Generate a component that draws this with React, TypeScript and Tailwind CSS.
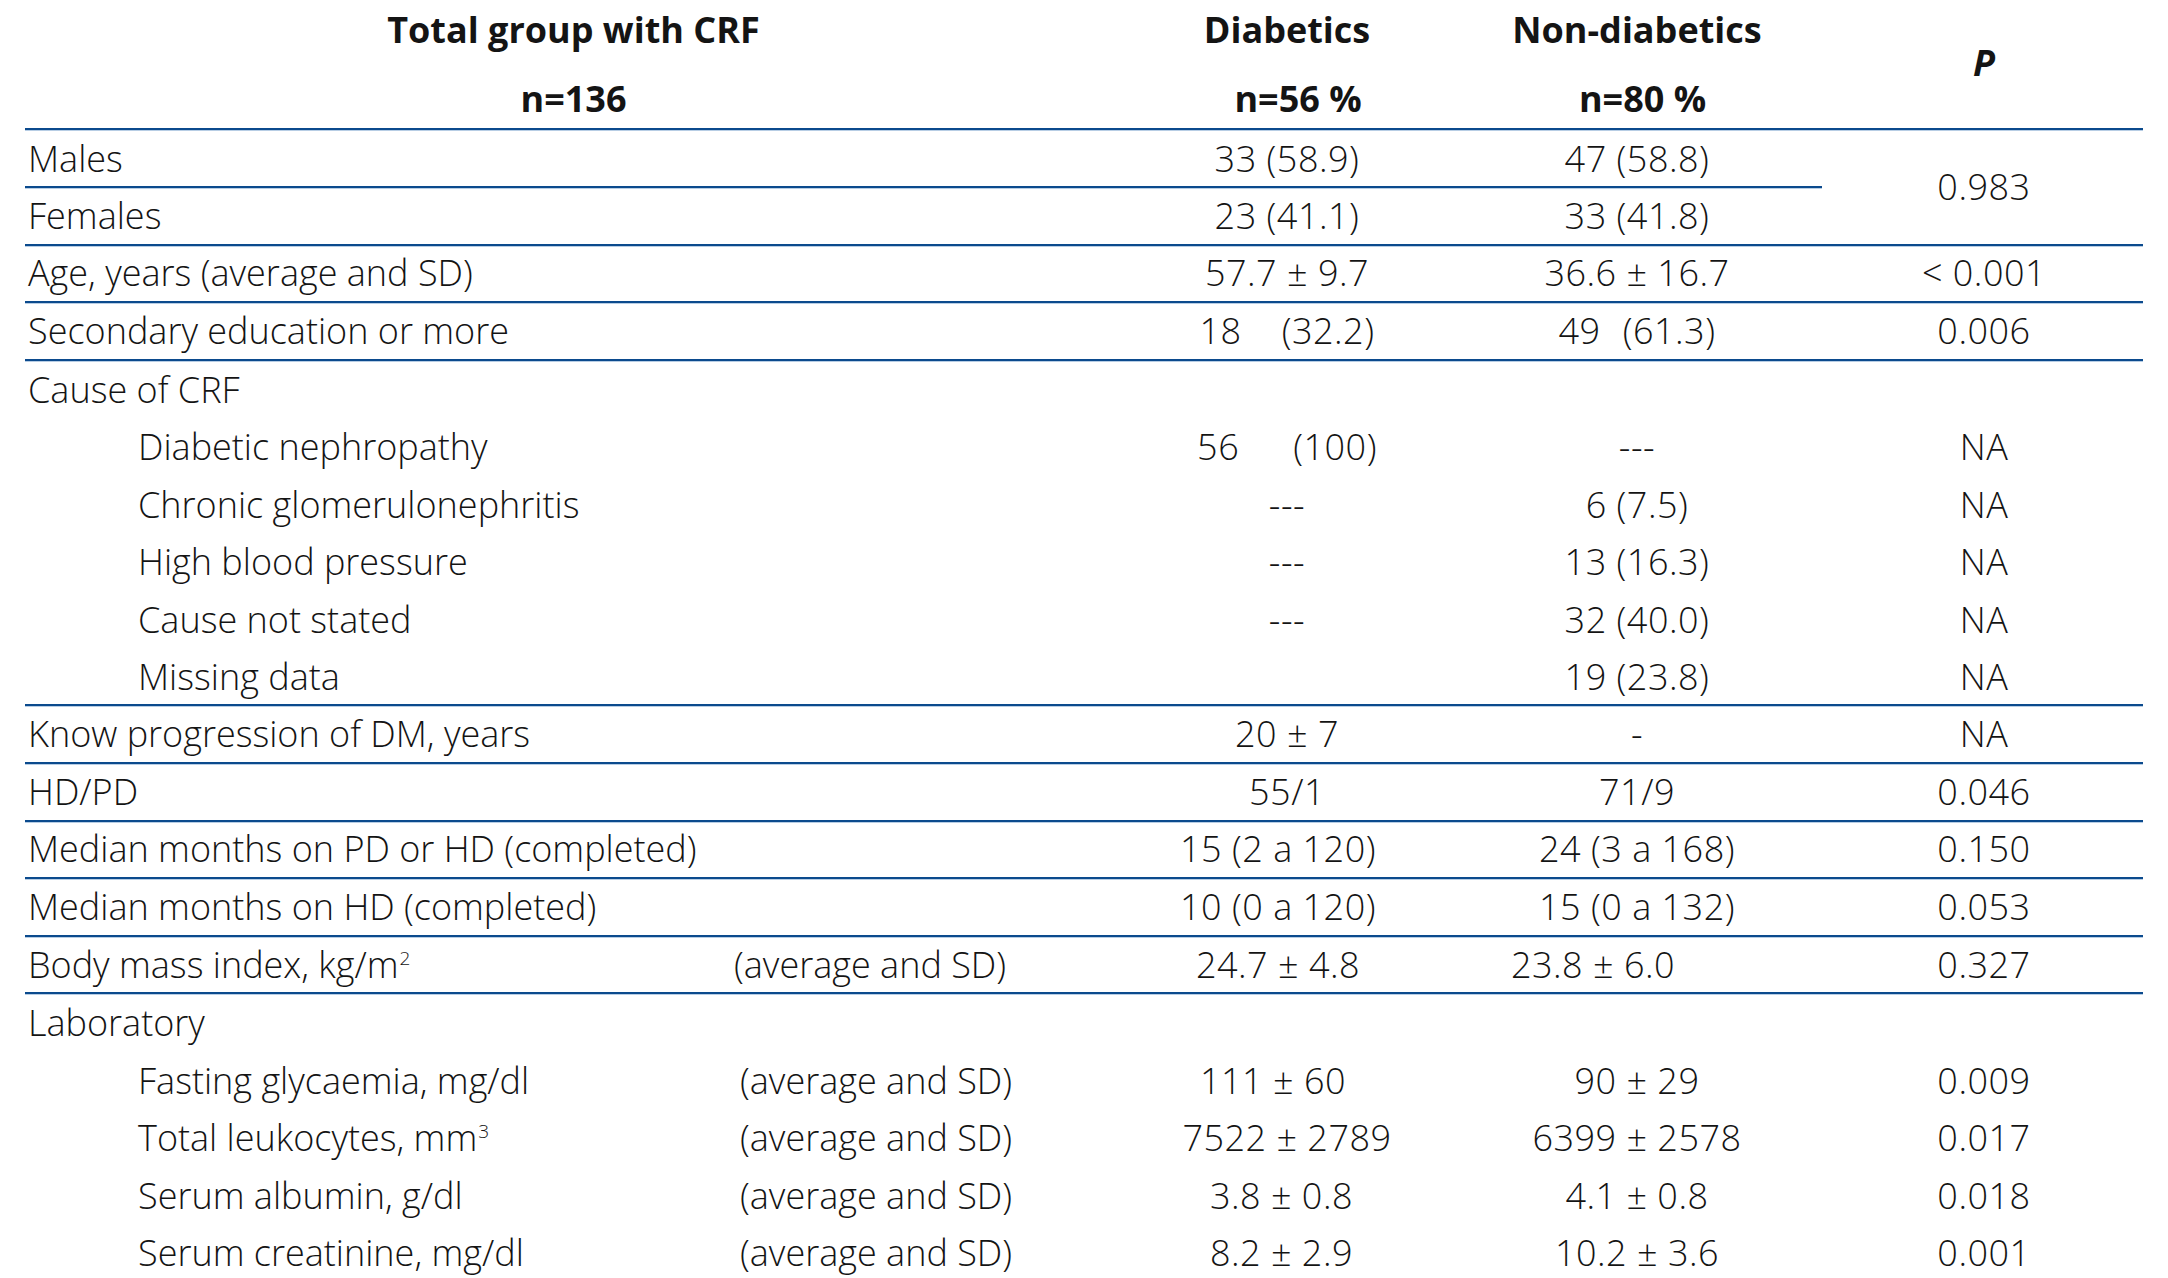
import React from "react";

type Row = {
  label: React.ReactNode;
  sub?: boolean;
  extra?: boolean;
  extraW?: string;
  d?: React.ReactNode;
  n?: React.ReactNode;
  p?: string;
  border?: boolean;
  dCls?: string;
  nCls?: string;
};

const line = "border-b-2 border-[#0b4a8d] shadow-[0_1px_0_#b7cde4]";
const val = "flex items-center justify-center whitespace-pre tracking-[0.5px]";

function Cells({ r }: { r: Row }) {
  return (
    <>
      <div className={`flex items-center ${r.sub ? "pl-[113px]" : "pl-[3px]"}`}>
        {r.extra ? (
          <>
            <span className={`inline-block ${r.extraW}`}>{r.label}</span>
            <span>(average and SD)</span>
          </>
        ) : (
          <span>{r.label}</span>
        )}
      </div>
      <div className={`${val} ${r.dCls ?? ""}`}>{r.d}</div>
      <div className={`${val} ${r.nCls ?? ""}`}>{r.n}</div>
      <div className={`${val} pl-[3px]`}>{r.p}</div>
    </>
  );
}

const cols = "grid grid-cols-[1097px_330px_370px_321px]";

function TRow({ r }: { r: Row }) {
  return (
    <div className={`${cols} h-[57.6px] ${r.border ? line : ""}`}>
      <Cells r={r} />
    </div>
  );
}

const gap = (w: string) => <span className={`inline-block ${w}`} />;
const sup = (t: string) => <span className="relative top-[-13px] text-[19px] pl-[1px]">{t}</span>;

const rowsA: Row[] = [
  { label: "Age, years (average and SD)", d: "57.7 ± 9.7", n: "36.6 ± 16.7", p: "< 0.001", border: true },
  {
    label: "Secondary education or more",
    d: (
      <>
        18{gap("w-[40px]")}(32.2)
      </>
    ),
    n: (
      <>
        49{gap("w-[22px]")}(61.3)
      </>
    ),
    p: "0.006",
    border: true,
  },
  { label: "Cause of CRF" },
  {
    label: "Diabetic nephropathy",
    sub: true,
    d: (
      <>
        56{gap("w-[54px]")}(100)
      </>
    ),
    n: "---",
    p: "NA",
  },
  { label: "Chronic glomerulonephritis", sub: true, d: "---", n: "6 (7.5)", p: "NA" },
  { label: "High blood pressure", sub: true, d: "---", n: "13 (16.3)", p: "NA" },
  { label: "Cause not stated", sub: true, d: "---", n: "32 (40.0)", p: "NA" },
  { label: "Missing data", sub: true, d: "", n: "19 (23.8)", p: "NA", border: true },
  { label: "Know progression of DM, years", d: "20 ± 7", n: "-", p: "NA", border: true },
  { label: "HD/PD", d: "55/1", n: "71/9", p: "0.046", border: true },
  { label: "Median months on PD or HD (completed)", d: "15 (2 a 120)", n: "24 (3 a 168)", p: "0.150", border: true, dCls: "pr-[18px]" },
  { label: "Median months on HD (completed)", d: "10 (0 a 120)", n: "15 (0 a 132)", p: "0.053", border: true, dCls: "pr-[18px]" },
  {
    label: <>Body mass index, kg/m{sup("2")}</>,
    extra: true,
    extraW: "w-[706px]",
    d: "24.7 ± 4.8",
    n: "23.8 ± 6.0",
    p: "0.327",
    border: true,
    dCls: "pr-[18px]",
    nCls: "pr-[88px]",
  },
  { label: "Laboratory" },
  { label: "Fasting glycaemia, mg/dl", sub: true, extra: true, extraW: "w-[602px]", d: "111 ± 60", n: "90 ± 29", p: "0.009", dCls: "pr-[28px]" },
  {
    label: <>Total leukocytes, mm{sup("3")}</>,
    sub: true,
    extra: true,
    extraW: "w-[602px]",
    d: "7522 ± 2789",
    n: "6399 ± 2578",
    p: "0.017",
  },
  { label: "Serum albumin, g/dl", sub: true, extra: true, extraW: "w-[602px]", d: "3.8 ± 0.8", n: "4.1 ± 0.8", p: "0.018", dCls: "pr-[11px]" },
  { label: "Serum creatinine, mg/dl", sub: true, extra: true, extraW: "w-[602px]", d: "8.2 ± 2.9", n: "10.2 ± 3.6", p: "0.001", dCls: "pr-[11px]" },
];

export default function App() {
  return (
    <div
      className="h-[1278px] w-[2168px] overflow-hidden bg-white text-[#141414] text-[36px] font-light leading-none"
      style={{ fontFamily: '"Open Sans", "Noto Sans", sans-serif' }}
    >
      <div className="ml-[25px] w-[2118px] pt-[1px]">
        {/* header */}
        <div className={`${cols} h-[129.4px] ${line} font-bold`}>
          <div className="flex flex-col items-center">
            <div className="h-[58px] flex items-center">Total group with CRF</div>
            <div className="h-[58px] mt-[11px] flex items-center">n=136</div>
          </div>
          <div className="flex flex-col items-center">
            <div className="h-[58px] flex items-center">Diabetics</div>
            <div className="h-[58px] mt-[11px] flex items-center pl-[22px]">n=56 %</div>
          </div>
          <div className="flex flex-col items-center">
            <div className="h-[58px] flex items-center">Non-diabetics</div>
            <div className="h-[58px] mt-[11px] flex items-center pl-[11px]">n=80 %</div>
          </div>
          <div className="flex items-center justify-center pl-[3px] pb-[4px] italic">P</div>
        </div>

        {/* Males / Females with shared P */}
        <div className={`flex ${line}`}>
          <div className="w-[1797px]">
            <div className={`grid grid-cols-[1097px_330px_370px] h-[57.6px] pt-[1px] ${line}`}>
              <div className="flex items-center pl-[3px]">Males</div>
              <div className={val}>33 (58.9)</div>
              <div className={val}>47 (58.8)</div>
            </div>
            <div className="grid grid-cols-[1097px_330px_370px] h-[55.6px] pt-[1px]">
              <div className="flex items-center pl-[3px]">Females</div>
              <div className={val}>23 (41.1)</div>
              <div className={val}>33 (41.8)</div>
            </div>
          </div>
          <div className={`w-[321px] ${val} pl-[3px]`}>0.983</div>
        </div>

        {rowsA.map((r, i) => (
          <TRow key={i} r={r} />
        ))}
      </div>
    </div>
  );
}
